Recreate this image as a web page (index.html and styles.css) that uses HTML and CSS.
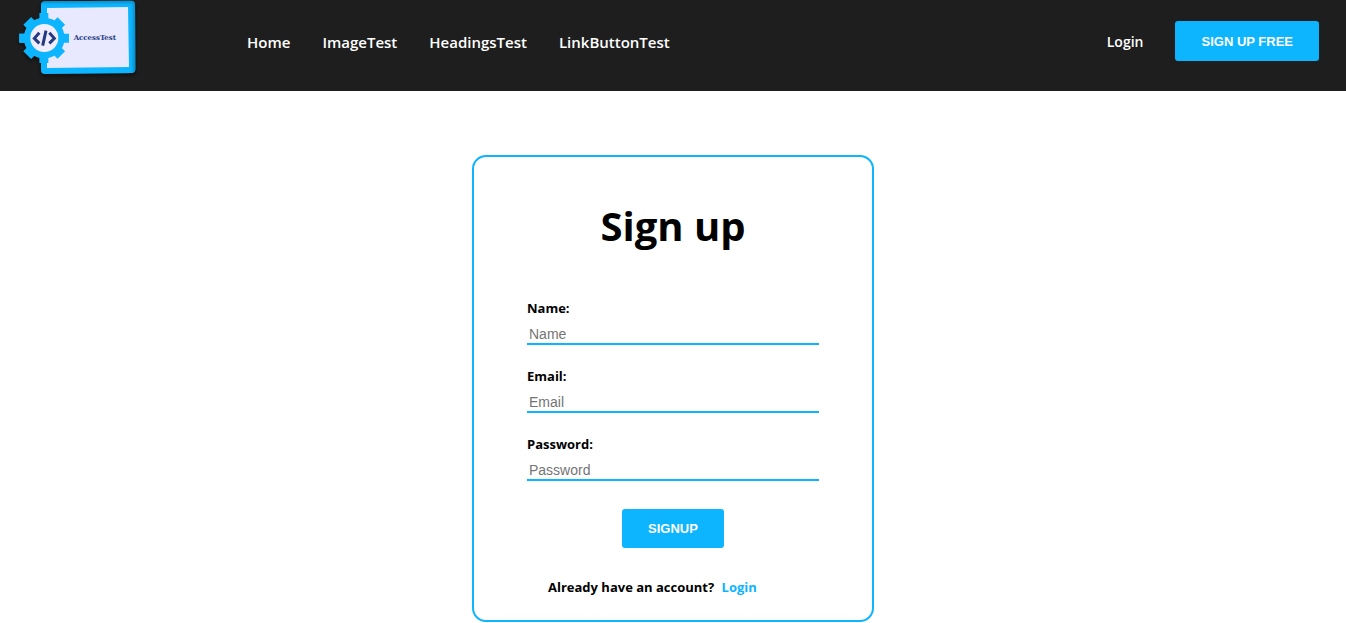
FILE: index.html
```html
<!DOCTYPE html>
<html lang="en">
<head>
<meta charset="utf-8">
<meta name="viewport" content="width=device-width, initial-scale=1">
<title>AccessTest - Sign up</title>
<link rel="stylesheet" href="styles.css">
</head>
<body>
<header class="header">
  <a class="logo" href="#" aria-label="AccessTest home">
    <svg class="logo-image" viewBox="0 0 420 240" aria-hidden="true">
      <defs>
        <filter id="shadow" x="-10%" y="-10%" width="120%" height="130%">
          <feDropShadow dx="0" dy="6" stdDeviation="6" flood-color="#000" flood-opacity=".6"/>
        </filter>
        <filter id="inner" x="-10%" y="-10%" width="120%" height="120%">
          <feGaussianBlur stdDeviation="4"/>
        </filter>
        <clipPath id="frame"><path d="M135 4L393 2Q405 2 405 14L406 208Q406 219 394 219L135 222Q123 222 123 210V15Q123 4 135 4Z"/></clipPath>
      </defs>
      <g fill="#0db4fe" filter="url(#shadow)">
        <path d="M135 4L393 2Q405 2 405 14L406 208Q406 219 394 219L135 222Q123 222 123 210V15Q123 4 135 4Z"/>
        <circle cx="133" cy="114" r="61"/>
        <path d="M119 39H145V189H119Z"/>
        <path d="M58 101H207V128H58Z"/>
        <path d="M117 42H149V186H117Z" transform="rotate(45 133 114)"/>
        <path d="M117 42H149V186H117Z" transform="rotate(-45 133 114)"/>
      </g>
      <g clip-path="url(#frame)">
        <path d="M123 3H405V220" fill="none" stroke="#087bb0" stroke-width="8" filter="url(#inner)"/>
      </g>
      <path d="M141 24L384 21L387 201L141 204Z" fill="#e8e8ff"/>
      <g fill="#0db4fe">
        <circle cx="133" cy="114" r="61"/>
        <path d="M119 39H145V189H119Z"/>
        <path d="M58 101H207V128H58Z"/>
        <path d="M117 42H149V186H117Z" transform="rotate(45 133 114)"/>
        <path d="M117 42H149V186H117Z" transform="rotate(-45 133 114)"/>
      </g>
      <circle cx="133" cy="114" r="42" fill="#f0edff"/>
      <path d="M118 98L103 115L118 130M148 98L163 115L148 130M138 92L128 137" fill="none" stroke="#243b7f" stroke-width="9"/>
      <text class="logo-text" x="221" y="120">AccessTest</text>
    </svg>
  </a>
  <nav class="nav" aria-label="Main">
    <a href="#">Home</a>
    <a href="#">ImageTest</a>
    <a href="#">HeadingsTest</a>
    <a href="#">LinkButtonTest</a>
  </nav>
  <div class="account">
    <a class="login" href="#">Login</a>
    <button class="button button-header" type="button">SIGN UP FREE</button>
  </div>
</header>
<main class="main">
  <form class="card">
    <h1 class="title">Sign up</h1>
    <div class="field">
      <label for="name">Name:</label>
      <input id="name" type="text" placeholder="Name">
    </div>
    <div class="field">
      <label for="email">Email:</label>
      <input id="email" type="email" placeholder="Email">
    </div>
    <div class="field">
      <label for="password">Password:</label>
      <input id="password" type="password" placeholder="Password">
    </div>
    <button class="button button-submit" type="submit">SIGNUP</button>
    <p class="existing">Already have an account? <a href="#">Login</a></p>
  </form>
</main>
</body>
</html>
```
FILE: styles.css
```css
* {
  box-sizing: border-box;
}

body {
  margin: 0;
  background: #fff;
  color: #000;
  font-family: "Segoe UI", "Open Sans", "Noto Sans", sans-serif;
  font-size: 14px;
  font-weight: 700;
}

a {
  color: inherit;
  text-decoration: none;
}

.header {
  display: flex;
  align-items: flex-start;
  padding: 0 27px 11px 0;
  background: #1e1e1e;
}

.logo {
  width: 247px;
}

.logo-image {
  display: block;
  width: 140px;
  height: 80px;
}

.logo-text {
  fill: #243b7f;
  font-family: "DejaVu Serif", serif;
  font-size: 21px;
  font-weight: 700;
}

.nav {
  display: flex;
  gap: 32px;
  padding-top: 32px;
  color: #fff;
  font-size: 15px;
  font-weight: 650;
  line-height: 20px;
}

.account {
  display: flex;
  align-items: center;
  gap: 32px;
  margin-left: auto;
  padding-top: 21px;
  color: #fff;
}

.login {
  font-size: 14px;
  font-weight: 650;
}

.button {
  border: 0;
  border-radius: 3px;
  background: #0db4fe;
  color: #fff;
  font-family: "Liberation Sans", Arial, sans-serif;
  font-size: 13px;
  font-weight: 700;
  cursor: pointer;
}

.button-header {
  height: 40px;
  padding: 0 26px;
}

.main {
  display: flex;
  justify-content: center;
  padding: 64px 16px 0;
}

.card {
  display: flex;
  flex-direction: column;
  width: 100%;
  max-width: 402px;
  padding: 40px 53px 23px;
  border: 2px solid #0db4fe;
  border-radius: 14px;
}

.title {
  margin: 0 0 42px;
  font-size: 40px;
  line-height: 58px;
  text-align: center;
}

.field {
  display: flex;
  flex-direction: column;
  gap: 6px;
  margin-bottom: 20px;
}

.field label {
  font-size: 13px;
  line-height: 22px;
}

.field input {
  width: 100%;
  height: 20px;
  padding: 0 2px;
  border: 0;
  border-bottom: 2px solid #0db4fe;
  outline: 0;
  background: transparent;
  font-family: "Liberation Sans", Arial, sans-serif;
  font-size: 14px;
}

.field input::placeholder {
  color: #757575;
}

.button-submit {
  align-self: center;
  height: 39px;
  margin-top: 8px;
  padding: 0 26px;
}

.existing {
  margin: 29px 0 0 21px;
  font-size: 13px;
  line-height: 20px;
}

.existing a {
  margin-left: 4px;
  color: #0db4fe;
}
```
